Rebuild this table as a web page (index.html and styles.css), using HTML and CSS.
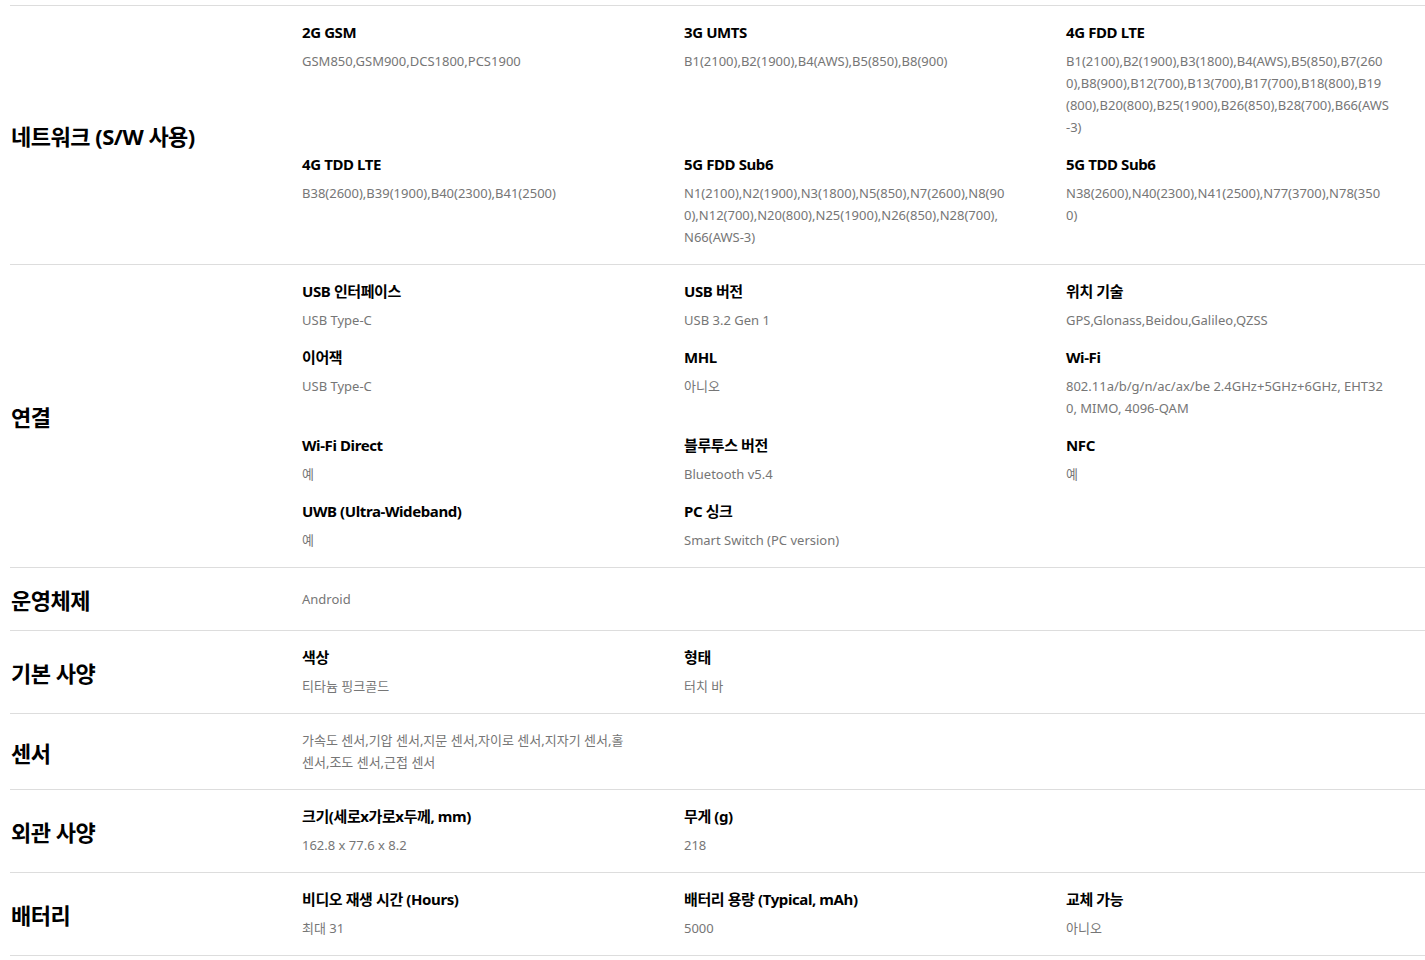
FILE: index.html
```html
<!DOCTYPE html>
<html lang="ko">

<head>
    <meta charset="UTF-8">
    <meta name="viewport" content="width=device-width, initial-scale=1.0">
    <title>사양</title>
    <link rel="stylesheet" href="styles.css">
</head>

<body>
    <div class="spec-list">
        <div class="spec-row">
            <h3 class="spec-name">네트워크 (S/W 사용)</h3>
            <ul class="spec-items">
                <li><p class="item-title">2G GSM</p><p class="item-value">GSM850,GSM900,DCS1800,PCS1900</p></li>
                <li><p class="item-title">3G UMTS</p><p class="item-value">B1(2100),B2(1900),B4(AWS),B5(850),B8(900)</p></li>
                <li><p class="item-title">4G FDD LTE</p><p class="item-value">B1(2100),B2(1900),B3(1800),B4(AWS),B5(850),B7(2600),B8(900),B12(700),B13(700),B17(700),B18(800),B19(800),B20(800),B25(1900),B26(850),B28(700),B66(AWS-3)</p></li>
                <li><p class="item-title">4G TDD LTE</p><p class="item-value">B38(2600),B39(1900),B40(2300),B41(2500)</p></li>
                <li><p class="item-title">5G FDD Sub6</p><p class="item-value">N1(2100),N2(1900),N3(1800),N5(850),N7(2600),N8(900),N12(700),N20(800),N25(1900),N26(850),N28(700), N66(AWS-3)</p></li>
                <li><p class="item-title">5G TDD Sub6</p><p class="item-value">N38(2600),N40(2300),N41(2500),N77(3700),N78(3500)</p></li>
            </ul>
        </div>

        <div class="spec-row">
            <h3 class="spec-name">연결</h3>
            <ul class="spec-items">
                <li><p class="item-title">USB 인터페이스</p><p class="item-value">USB Type-C</p></li>
                <li><p class="item-title">USB 버전</p><p class="item-value">USB 3.2 Gen 1</p></li>
                <li><p class="item-title">위치 기술</p><p class="item-value">GPS,Glonass,Beidou,Galileo,QZSS</p></li>
                <li><p class="item-title">이어잭</p><p class="item-value">USB Type-C</p></li>
                <li><p class="item-title">MHL</p><p class="item-value">아니오</p></li>
                <li><p class="item-title">Wi-Fi</p><p class="item-value">802.11a/b/g/n/ac/ax/be 2.4GHz+5GHz+6GHz, EHT320, MIMO, 4096-QAM</p></li>
                <li><p class="item-title">Wi-Fi Direct</p><p class="item-value">예</p></li>
                <li><p class="item-title">블루투스 버전</p><p class="item-value">Bluetooth v5.4</p></li>
                <li><p class="item-title">NFC</p><p class="item-value">예</p></li>
                <li><p class="item-title">UWB (Ultra-Wideband)</p><p class="item-value">예</p></li>
                <li><p class="item-title">PC 싱크</p><p class="item-value">Smart Switch (PC version)</p></li>
            </ul>
        </div>

        <div class="spec-row">
            <h3 class="spec-name">운영체제</h3>
            <ul class="spec-items">
                <li><p class="item-value">Android</p></li>
            </ul>
        </div>

        <div class="spec-row">
            <h3 class="spec-name">기본 사양</h3>
            <ul class="spec-items">
                <li><p class="item-title">색상</p><p class="item-value">티타늄 핑크골드</p></li>
                <li><p class="item-title">형태</p><p class="item-value">터치 바</p></li>
            </ul>
        </div>

        <div class="spec-row">
            <h3 class="spec-name">센서</h3>
            <ul class="spec-items">
                <li><p class="item-value">가속도 센서,기압 센서,지문 센서,자이로 센서,지자기 센서,홀 센서,조도 센서,근접 센서</p></li>
            </ul>
        </div>

        <div class="spec-row">
            <h3 class="spec-name">외관 사양</h3>
            <ul class="spec-items">
                <li><p class="item-title">크기(세로x가로x두께, mm)</p><p class="item-value">162.8 x 77.6 x 8.2</p></li>
                <li><p class="item-title">무게 (g)</p><p class="item-value">218</p></li>
            </ul>
        </div>

        <div class="spec-row">
            <h3 class="spec-name">배터리</h3>
            <ul class="spec-items">
                <li><p class="item-title">비디오 재생 시간 (Hours)</p><p class="item-value">최대 31</p></li>
                <li><p class="item-title">배터리 용량 (Typical, mAh)</p><p class="item-value">5000</p></li>
                <li><p class="item-title">교체 가능</p><p class="item-value">아니오</p></li>
            </ul>
        </div>
    </div>
</body>

</html>
```

FILE: styles.css
```css
body {
    margin: 0;
    padding: 5px 0 0 10px;
    font-family: "Noto Sans", "Noto Sans CJK KR", sans-serif;
    background-color: #fff;
    color: #000;
    overflow-x: hidden;
}

.spec-list {
    border-top: 1px solid #ddd;
}

.spec-row {
    display: flex;
    align-items: center;
    min-height: 62px;
    border-bottom: 1px solid #ddd;
}

.spec-name {
    flex: 0 0 291px;
    margin: 0;
    padding-left: 1px;
    font-size: 22px;
    font-weight: 700;
    letter-spacing: -0.5px;
}

.spec-items {
    flex: 1;
    display: grid;
    grid-template-columns: 382px 382px 1fr;
    row-gap: 15px;
    margin: 0;
    padding: 15px 0 16px;
    list-style: none;
}

.item-title {
    margin: 0;
    font-size: 15px;
    line-height: 22px;
    font-weight: 700;
    letter-spacing: -0.4px;
}

.item-value {
    max-width: 324px;
    margin: 7px 0 0;
    font-size: 13px;
    line-height: 22px;
    color: #767676;
    word-break: break-all;
}

.item-value:first-child {
    margin-top: 0;
}
```
